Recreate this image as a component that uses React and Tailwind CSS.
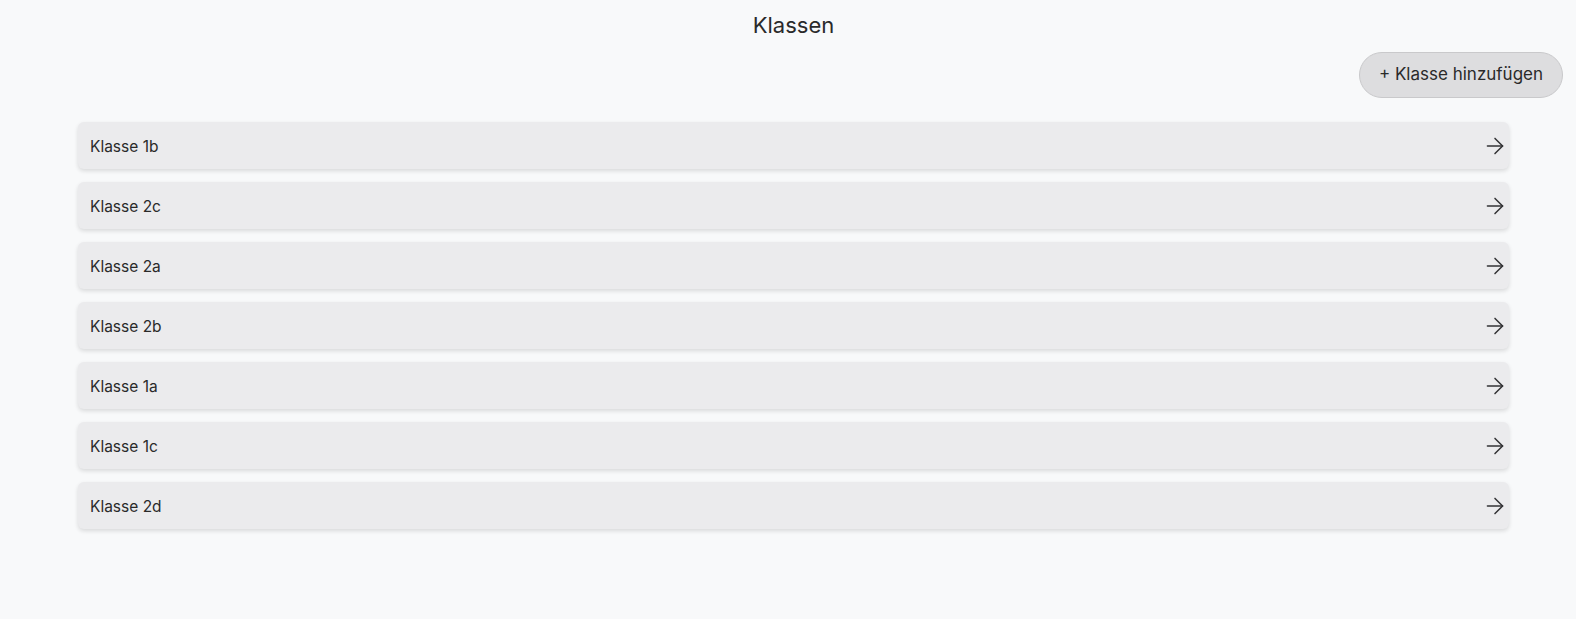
import React from 'react';
import { ArrowRight } from 'lucide-react';

const classes = ['Klasse 1b', 'Klasse 2c', 'Klasse 2a', 'Klasse 2b', 'Klasse 1a', 'Klasse 1c', 'Klasse 2d'];

const ClassRow = ({ name }) => (
  <div className="flex h-[47px] items-center justify-between rounded-md bg-[#ebebed] pl-3 pr-[1px] shadow-[0_2px_4px_rgba(0,0,0,0.13)]">
    <span className="mt-[2px] text-[15.5px] text-[#2a2a2a]">{name}</span>
    <ArrowRight className="h-[26px] w-[26px] text-[#333335]" strokeWidth={1.4} />
  </div>
);

export default function App() {
  return (
    <div className="min-h-screen bg-[#f8f9fa] font-['Inter',sans-serif] text-[#2a2a2a]">
      {/* Header */}
      <div className="flex justify-center pl-[11px] pt-[9px]">
        <h1 className="text-[22px] leading-[32px] font-normal">Klassen</h1>
      </div>

      <div className="mt-[11px] flex justify-end pr-[13px]">
        <button className="h-[46px] w-[204px] rounded-full border border-[#c9c9cb] bg-[#dddddf] text-[17px] text-[#2a2a2a]">
          + Klasse hinzufügen
        </button>
      </div>

      {/* Class list */}
      <div className="ml-[78px] mr-[67px] mt-[24px] flex flex-col gap-[13px]">
        {classes.map((name) => (
          <ClassRow key={name} name={name} />
        ))}
      </div>
    </div>
  );
}
